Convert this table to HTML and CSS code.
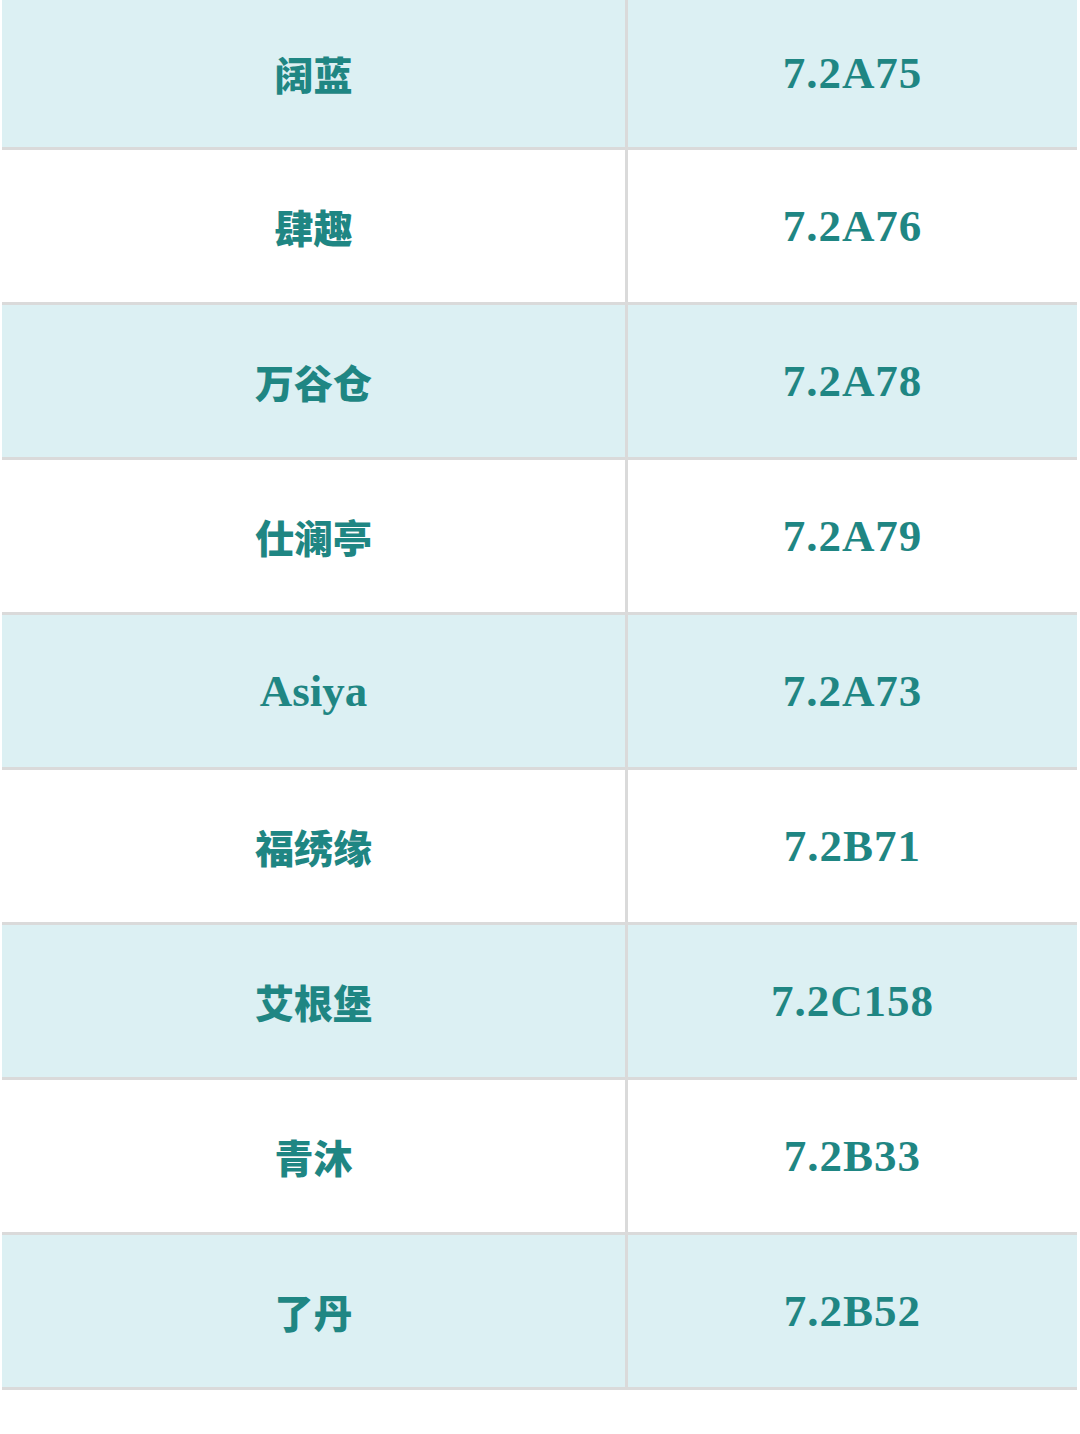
FILE: index.html
```html
<!DOCTYPE html>
<html lang="zh">
<head>
<meta charset="utf-8">
<title>门店编号</title>
<link rel="stylesheet" href="styles.css">
</head>
<body>
<table class="list">
  <tbody>
    <tr class="row tinted first"><td class="name zh">阔蓝</td><td class="code">7.2A75</td></tr>
    <tr class="row"><td class="name zh">肆趣</td><td class="code">7.2A76</td></tr>
    <tr class="row tinted"><td class="name zh">万谷仓</td><td class="code">7.2A78</td></tr>
    <tr class="row"><td class="name zh">仕澜亭</td><td class="code">7.2A79</td></tr>
    <tr class="row tinted"><td class="name">Asiya</td><td class="code">7.2A73</td></tr>
    <tr class="row"><td class="name zh">福绣缘</td><td class="code">7.2B71</td></tr>
    <tr class="row tinted"><td class="name zh">艾根堡</td><td class="code">7.2C158</td></tr>
    <tr class="row"><td class="name zh">青沐</td><td class="code">7.2B33</td></tr>
    <tr class="row tinted"><td class="name zh">了丹</td><td class="code">7.2B52</td></tr>
  </tbody>
</table>
</body>
</html>
```

FILE: styles.css
```css
html, body {
  margin: 0;
  padding: 0;
  background: #ffffff;
}

.list {
  margin-left: 2px;
  width: 1075px;
  border-collapse: collapse;
  table-layout: fixed;
  font-family: "Liberation Serif", "Noto Sans CJK SC", serif;
  font-weight: bold;
  color: #1f8683;
}

.list td {
  padding: 0;
  height: 152px;
  text-align: center;
  vertical-align: middle;
  border-bottom: 3px solid #dadada;
  font-size: 45px;
  line-height: 1;
}

.list td.code {
  letter-spacing: 1px;
}

.list .row.first td {
  height: 147px;
}

.list td.name {
  width: 623px;
  border-right: 3px solid #dadada;
}

.list td.name.zh {
  font-family: "Noto Sans CJK SC", sans-serif;
  font-weight: 900;
  font-size: 39px;
}

.list .row.tinted td {
  background: #dcf0f3;
}
```
